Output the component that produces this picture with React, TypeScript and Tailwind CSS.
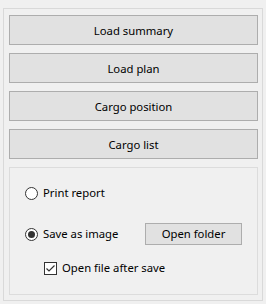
const actions = ["Load summary", "Load plan", "Cargo position", "Cargo list"];

function Radio({ checked }: { checked?: boolean }) {
  return (
    <span className="flex h-[13px] w-[13px] shrink-0 items-center justify-center rounded-full border border-[#333333] bg-white">
      {checked && <span className="h-[7px] w-[7px] rounded-full bg-[#333333]" />}
    </span>
  );
}

function Checkbox() {
  return (
    <span className="flex h-[13px] w-[13px] shrink-0 items-center justify-center border border-[#333333] bg-white">
      <svg width="11" height="11" viewBox="0 0 11 11" fill="none">
        <path d="M1.5 5.5 L4 8 L9.5 2.5" stroke="#333333" strokeWidth="1.2" />
      </svg>
    </span>
  );
}

export default function App() {
  return (
    <div className="h-[304px] w-[266px] bg-[#f0f0f0] pb-[3px] pl-[3px] pr-[3px] pt-[8px] font-['Noto_Sans',sans-serif] text-[11.3px] text-black">
      <div className="flex h-full flex-col border border-[#d9d9d9] pb-[5px] pl-[5px] pr-[4px] pt-[6px]">
        <div className="flex flex-col gap-[8px]">
          {actions.map((label) => (
            <button
              key={label}
              className="flex h-[30px] items-center justify-center border border-[#adadad] bg-[#e1e1e1] pt-[2px]"
            >
              {label}
            </button>
          ))}
        </div>

        <div className="mt-[8px] flex h-[128px] flex-col border border-[#dcdcdc] pb-[18px] pl-[15px] pt-[17px]">
          <label className="flex h-[16px] items-center gap-[5px]">
            <Radio />
            <span className="pt-[1px]">Print report</span>
          </label>

          <div className="mt-[22px] flex h-[22px] items-center">
            <label className="flex items-center gap-[5px]">
              <Radio checked />
              <span className="w-[102px] pt-[1px]">Save as image</span>
            </label>
            <button className="flex h-[22px] w-[97px] items-center justify-center border border-[#adadad] bg-[#e1e1e1] pt-[1px]">
              Open folder
            </button>
          </div>

          <label className="ml-[19px] mt-[15px] flex h-[16px] items-center gap-[5px]">
            <Checkbox />
            <span className="pt-[1px]">Open file after save</span>
          </label>
        </div>
      </div>
    </div>
  );
}
